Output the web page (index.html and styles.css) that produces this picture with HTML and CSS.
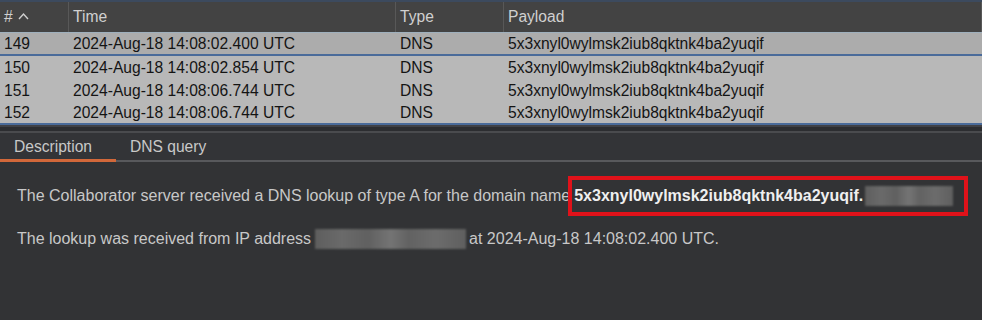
FILE: index.html
```html
<!DOCTYPE html>
<html lang="en">
<head>
  <meta charset="UTF-8">
  <title>Collaborator</title>
  <link rel="stylesheet" href="styles.css">
</head>
<body>
  <div class="table">
    <div class="row head">
      <div class="cell c-num">#
        <svg class="caret" width="11" height="8" viewBox="0 0 11 8"><path d="M1 7 L5.5 2 L10 7" fill="none" stroke="#cfcfcf" stroke-width="1.4"/></svg>
      </div>
      <div class="cell c-time">Time</div>
      <div class="cell c-type">Type</div>
      <div class="cell c-payload">Payload</div>
    </div>
    <div class="row selected">
      <div class="cell c-num">149</div>
      <div class="cell c-time">2024-Aug-18 14:08:02.400 UTC</div>
      <div class="cell c-type">DNS</div>
      <div class="cell c-payload">5x3xnyl0wylmsk2iub8qktnk4ba2yuqif</div>
    </div>
    <div class="row">
      <div class="cell c-num">150</div>
      <div class="cell c-time">2024-Aug-18 14:08:02.854 UTC</div>
      <div class="cell c-type">DNS</div>
      <div class="cell c-payload">5x3xnyl0wylmsk2iub8qktnk4ba2yuqif</div>
    </div>
    <div class="row">
      <div class="cell c-num">151</div>
      <div class="cell c-time">2024-Aug-18 14:08:06.744 UTC</div>
      <div class="cell c-type">DNS</div>
      <div class="cell c-payload">5x3xnyl0wylmsk2iub8qktnk4ba2yuqif</div>
    </div>
    <div class="row last">
      <div class="cell c-num">152</div>
      <div class="cell c-time">2024-Aug-18 14:08:06.744 UTC</div>
      <div class="cell c-type">DNS</div>
      <div class="cell c-payload">5x3xnyl0wylmsk2iub8qktnk4ba2yuqif</div>
    </div>
  </div>

  <div class="splitter"></div>

  <div class="tabs">
    <div class="tab active">Description</div>
    <div class="tab">DNS query</div>
  </div>

  <div class="details">
    <p class="first">The Collaborator server received a DNS lookup of type A for the domain name<span class="highlight"><b>5x3xnyl0wylmsk2iub8qktnk4ba2yuqif.</b><span class="blur domain"></span></span></p>
    <p>The lookup was received from IP address <span class="blur ip"></span> at 2024-Aug-18 14:08:02.400 UTC.</p>
  </div>
</body>
</html>
```

FILE: styles.css
```css
* {
  box-sizing: border-box;
}
body {
  margin: 0;
  background: #323335;
  font-family: "Liberation Sans", Arial, sans-serif;
  width: 982px;
  height: 320px;
  overflow: hidden;
}
.table {
  border-top: 2px solid #3c4a5e;
}
.row {
  display: grid;
  grid-template-columns: 69px 327px 108px 1fr;
  height: 23px;
  padding-top: 1px;
  background: #b8b8b8;
  color: #141414;
  font-size: 15.6px;
  align-items: center;
}
.row.head {
  height: 31px;
  padding-top: 0;
  background: #434343;
  color: #d0d0d0;
  border-bottom: 1px solid #9fb0bd;
}
.row.head .cell {
  height: 100%;
  display: flex;
  align-items: center;
  border-right: 1px solid #585858;
}
.row.selected {
  background: #acacac;
  border-bottom: 2px solid #4a6b9a;
}
.row.last {
  border-bottom: 2px solid #4a6b9a;
}
.cell {
  padding-left: 4px;
  white-space: nowrap;
  overflow: hidden;
}
.caret {
  margin-left: 5px;
  margin-top: -2px;
}
.splitter {
  height: 8px;
  background: #2c2d30;
  border-top: 2px solid #404146;
  border-bottom: 2px solid #4a4b4e;
}
.tabs {
  display: flex;
  height: 29px;
  background: #333437;
  border-bottom: 2px solid #58595c;
}
.tab {
  color: #c8c8c8;
  font-size: 15.6px;
  padding: 5px 14px 0;
}
.tab.active {
  width: 116px;
  border-bottom: 3px solid #d2683a;
  margin-bottom: -2px;
}
.details {
  padding: 14px 17px;
  color: #c8c8c8;
  font-size: 16px;
}
.details p {
  margin: 0;
  display: flex;
  align-items: center;
  height: 22px;
  white-space: nowrap;
}
.details p.first {
  height: 40px;
  margin-bottom: 12px;
}
.highlight {
  display: inline-flex;
  align-items: center;
  height: 40px;
  border: 4px solid #e0121a;
  padding: 0 11px 0 2px;
  margin-left: -2px;
  color: #efefef;
}
.blur {
  display: inline-block;
  height: 20px;
  background: linear-gradient(90deg, #5e5e5e 0%, #6a6a6a 18%, #606060 35%, #747474 50%, #626262 62%, #6c6c6c 80%, #5f5f5f 100%);
  filter: blur(1px);
}
.domain {
  width: 88px;
  margin-left: 2px;
}
.ip {
  width: 151px;
  margin: 0 3px 0 4px;
}
```
